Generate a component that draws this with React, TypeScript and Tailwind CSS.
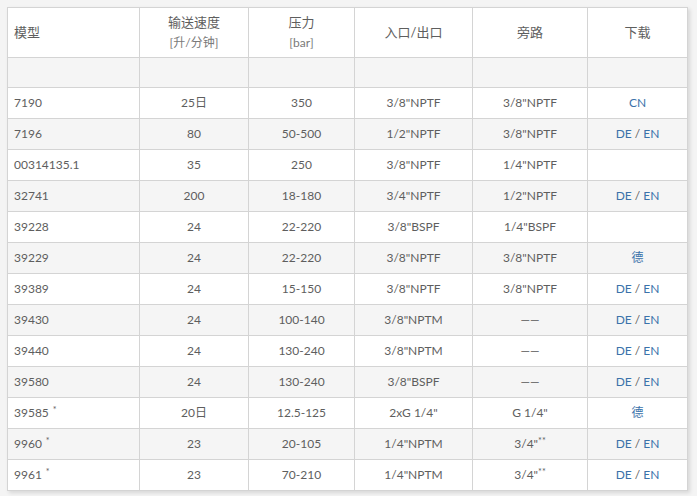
import React from "react";

type Row = {
  model: string;
  star?: boolean;
  flow: string;
  pressure: string;
  port: string;
  bypass: React.ReactNode;
  dl: "CN" | "DEEN" | "DE" | "";
};

const rows: Row[] = [
  { model: "7190", flow: "25日", pressure: "350", port: '3/8"NPTF', bypass: '3/8"NPTF', dl: "CN" },
  { model: "7196", flow: "80", pressure: "50-500", port: '1/2"NPTF', bypass: '3/8"NPTF', dl: "DEEN" },
  { model: "00314135.1", flow: "35", pressure: "250", port: '3/8"NPTF', bypass: '1/4"NPTF', dl: "" },
  { model: "32741", flow: "200", pressure: "18-180", port: '3/4"NPTF', bypass: '1/2"NPTF', dl: "DEEN" },
  { model: "39228", flow: "24", pressure: "22-220", port: '3/8"BSPF', bypass: '1/4"BSPF', dl: "" },
  { model: "39229", flow: "24", pressure: "22-220", port: '3/8"NPTF', bypass: '3/8"NPTF', dl: "DE" },
  { model: "39389", flow: "24", pressure: "15-150", port: '3/8"NPTF', bypass: '3/8"NPTF', dl: "DEEN" },
  { model: "39430", flow: "24", pressure: "100-140", port: '3/8"NPTM', bypass: "——", dl: "DEEN" },
  { model: "39440", flow: "24", pressure: "130-240", port: '3/8"NPTM', bypass: "——", dl: "DEEN" },
  { model: "39580", flow: "24", pressure: "130-240", port: '3/8"BSPF', bypass: "——", dl: "DEEN" },
  { model: "39585", star: true, flow: "20日", pressure: "12.5-125", port: '2xG 1/4"', bypass: 'G 1/4"', dl: "DE" },
  {
    model: "9960",
    star: true,
    flow: "23",
    pressure: "20-105",
    port: '1/4"NPTM',
    bypass: (
      <>
        3/4"<sup className="text-[9px]">**</sup>
      </>
    ),
    dl: "DEEN",
  },
  {
    model: "9961",
    star: true,
    flow: "23",
    pressure: "70-210",
    port: '1/4"NPTM',
    bypass: (
      <>
        3/4"<sup className="text-[9px]">**</sup>
      </>
    ),
    dl: "DEEN",
  },
];

function Download({ kind }: { kind: Row["dl"] }) {
  if (kind === "CN") return <a className="text-[#3b72aa]">CN</a>;
  if (kind === "DE") return <a className="text-[#3b72aa]">德</a>;
  if (kind === "DEEN")
    return (
      <>
        <a className="text-[#3b72aa]">DE</a> / <a className="text-[#3b72aa]">EN</a>
      </>
    );
  return null;
}

export default function App() {
  const td = "border border-[#d4d4d4] px-[6px] h-[31px] text-center";
  return (
    <div
      className="min-h-screen bg-[#f4f4f4] pt-[7px] pl-[7px] text-[12px] text-[#5e5e5e]"
      style={{ fontFamily: 'Lato, "Noto Sans CJK SC", sans-serif' }}
    >
      <table className="w-[680px] border-collapse bg-white shadow-[2px_2px_4px_rgba(0,0,0,0.12)] table-fixed">
        <colgroup>
          <col className="w-[132px]" />
          <col className="w-[109px]" />
          <col className="w-[106px]" />
          <col className="w-[118px]" />
          <col className="w-[115px]" />
          <col className="w-[100px]" />
        </colgroup>
        <thead>
          <tr className="h-[50px]">
            <th className="border border-[#d4d4d4] px-[6px] text-left font-normal text-[13px]">模型</th>
            <th className="border border-[#d4d4d4] font-normal text-[13px] leading-[20px]">
              输送速度
              <br />
              <span className="text-[12px] text-[#7a7a7a]">[升/分钟]</span>
            </th>
            <th className="border border-[#d4d4d4] font-normal text-[13px] leading-[20px]">
              压力
              <br />
              <span className="text-[12px] text-[#7a7a7a]">[bar]</span>
            </th>
            <th className="border border-[#d4d4d4] font-normal text-[13px]">入口/出口</th>
            <th className="border border-[#d4d4d4] font-normal text-[13px]">旁路</th>
            <th className="border border-[#d4d4d4] font-normal text-[13px]">下载</th>
          </tr>
        </thead>
        <tbody>
          <tr className="h-[30px] bg-[#f5f5f5]">
            <td className="border border-[#d4d4d4]"></td>
            <td className="border border-[#d4d4d4]"></td>
            <td className="border border-[#d4d4d4]"></td>
            <td className="border border-[#d4d4d4]"></td>
            <td className="border border-[#d4d4d4]"></td>
            <td className="border border-[#d4d4d4]"></td>
          </tr>
          {rows.map((r, i) => (
            <tr key={r.model} className={i % 2 === 1 ? "bg-[#f5f5f5]" : "bg-white"}>
              <td className={td + " text-left"}>
                {r.model}
                {r.star && <sup className="ml-[4px] text-[9px]">*</sup>}
              </td>
              <td className={td}>{r.flow}</td>
              <td className={td}>{r.pressure}</td>
              <td className={td}>{r.port}</td>
              <td className={td}>{r.bypass}</td>
              <td className={td}>
                <Download kind={r.dl} />
              </td>
            </tr>
          ))}
        </tbody>
      </table>
    </div>
  );
}
